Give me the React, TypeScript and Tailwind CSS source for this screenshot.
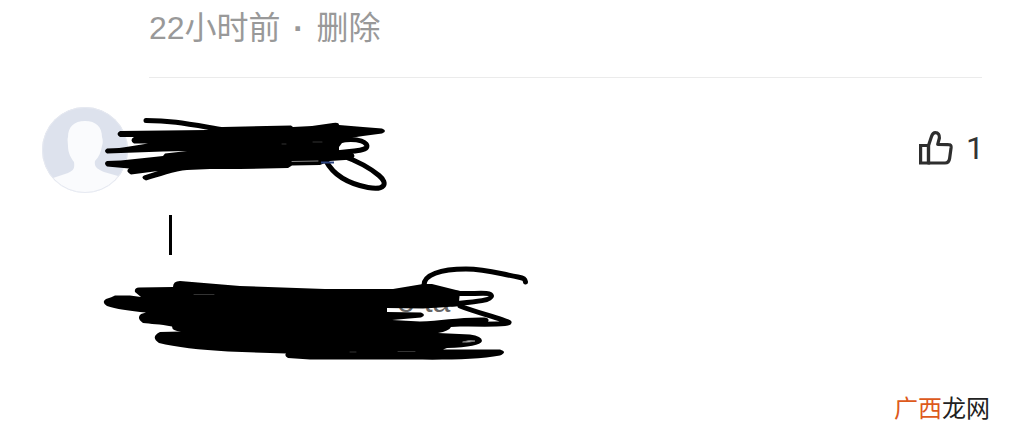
const textFont = "font-['Liberation_Sans','Noto_Sans_CJK_SC',sans-serif]";

function Avatar() {
  return (
    <svg className="w-[86px] h-[86px] shrink-0" viewBox="0 0 86 86" role="img" aria-label="用户头像">
      <clipPath id="avatar-clip">
        <circle cx="43" cy="43" r="43" />
      </clipPath>
      <circle cx="43" cy="43" r="43" fill="#dde2ed" />
      <path
        clipPath="url(#avatar-clip)"
        fill="#fafbfd"
        d="M43 14C32 14 26 20 26 30C25 33 26 36 26 39C26 46 29 51 32 55C33 62 31 64 26 66L11 71L11 88H76V69L62 65C55 62 52 60 53 54C57 50 59 45 60 39C61 36 61 33 60 30C60 20 54 14 43 14Z"
      />
      <circle cx="43" cy="43" r="42.5" fill="none" stroke="#e6e9f1" />
    </svg>
  );
}

function ThumbIcon() {
  return (
    <svg
      className="w-9 h-9"
      viewBox="919 129 36 36"
      fill="none"
      stroke="#2e2e2e"
      strokeWidth="3.2"
      strokeLinejoin="round"
      aria-hidden="true"
    >
      <path d="M929.5 144.5H921.6V162H929.5Z" strokeLinejoin="miter" />
      <path d="M929.5 144.5L932.5 135.5C933.5 132.5 934.5 131.6 936.3 131.6C939.3 131.6 940.6 134 940.4 137L938.7 143.3L949.5 143.6C951.5 143.6 952.3 144.5 952.1 146.5L950.6 157.5C950.2 160.5 949 162 946 162H929.5Z" />
    </svg>
  );
}

function NameScribble() {
  return (
    <svg
      className="absolute left-[100px] top-[32px] w-[300px] h-[90px]"
      viewBox="100 110 300 90"
      fill="none"
      stroke="#000"
      strokeLinecap="round"
      strokeLinejoin="round"
      aria-hidden="true"
    >
      <path
        fill="#000"
        stroke="none"
        d="M120 131L207 130L223 127L291 125.500L293 127L312 126L333 123Q339 122 339 125L363 127L382 128.500Q388 131 382 133.500L363 136L353 137.500L342 143L339 147V151L352 152.500Q357 156 352 159L345 160L330 161L320 165L292 165.500L288 168L240 169L210 169L187 170C175 171 158 177 146 180.500Q140 178 144 175.500L158 171L131 174.500Q125 171 129 168.500L107 166.500Q103 163 107 161C125 161 145 157.500 163 156L165 153.500L187 151L163 151.500L107 153.500Q103 151 107 148.500C125 148.500 135 145 148 143.500L134 143.500Q129 140 134 137L120 137Q115 134 120 131Z"
      />
      <g strokeWidth="5">
        <path d="M146 120.500C172 120.500 188 124 224 130" />
        <path d="M340 140.500C359 137 369 143 366.500 147.500C364 151 352 151 335 153" />
        <path d="M326 161C334 176 350 184 368 187.500C384 190.500 389 184 379 175.500C370 168 357 161 343 156" />
      </g>
      <path d="M292 161.500L318 161" stroke="#858585" strokeWidth="1" />
      <path d="M321 162.500H334" stroke="#2b4380" strokeWidth="2" strokeLinecap="butt" />
      <path d="M313 142H322M282 144H286" stroke="#333" strokeWidth="1" />
    </svg>
  );
}

function CommentScribble() {
  return (
    <svg
      className="absolute left-[100px] top-[182px] w-[440px] h-[110px]"
      viewBox="100 260 440 110"
      fill="none"
      stroke="#000"
      strokeLinecap="round"
      strokeLinejoin="round"
      aria-hidden="true"
    >
      <path
        fill="#000"
        stroke="none"
        d="M106 299Q112 297 115 295.500L130 295.500L141 297L135 292Q134 288 139 287.500L173 287Q173 281 180 281L240 286L325 289L393 289L423 284L432 284L460 291L459 302L461 306L440 307.500L423 308.500L387 308L387 312L421 312.500Q427 315 421 317.500L392 320L420 321.500C440 321 460 317 485 317.500Q491 319 487 323L451 327Q449 331 438 333L470 334.500Q482 336 482 341Q480 347 447 348L443 349.500L500 349.500Q508 352 500 355.500C480 359.500 445 360 413 359.500H310L288 358Q284 356 286 353.500L228 351.500C200 350 175 347 159 343Q150 337 160 332L181 331.500Q172 331 172 326.500C160 324 150 324 143 323Q136 318 141 314L146 312.500C130 311 115 309 107 306Q101 302 106 299Z"
      />
      <g strokeWidth="5">
        <path d="M424 285C424 275 440 269 466 269C487 269 500 274 518 277C524 278 525 279 525.500 282" />
        <path d="M455 293C470 295 491 291 491.500 296C491 301 472 302 452 304" />
        <path d="M460 306C475 312 502 319 509 322.500C506 325 480 324 445 324" />
      </g>
      <path d="M463 342Q469 339.500 475 341Q470 342.500 463 342Z" fill="#eee" stroke="#777" strokeWidth="1" />
      <path d="M194 294.500H214M398 351.500H415M350 352H356" stroke="#333" strokeWidth="1" />
    </svg>
  );
}

export default function App() {
  return (
    <main className={`w-full bg-white text-[#999] text-[32px] ${textFont}`}>
      <div className="pl-[149px] pr-[42px]">
        <div className="flex items-start gap-3 border-b border-[#ebebeb] pt-1 pb-[25px] leading-[48px]">
          <time>22小时前</time>
          <span className="w-3 text-center font-bold">·</span>
          <button type="button">删除</button>
        </div>
      </div>

      <article className="relative pl-[42px] pr-10 pt-[29px]">
        <header className="flex items-center justify-between">
          <Avatar />
          <button type="button" aria-label="赞 1" className="flex items-center gap-3 pb-1 text-[#333] leading-9">
            <ThumbIcon />
            <span className="font-['Roboto',sans-serif]">1</span>
          </button>
        </header>

        <div className="pl-[107px] pt-[22px]">
          <div className="ml-5 w-[3px] h-10 bg-black" />
          <p className="mt-6 pl-[248px] leading-[44px] text-[#666]">o ta</p>
        </div>

        <NameScribble />
        <CommentScribble />
      </article>

      <footer className="flex justify-end pt-[74px] pb-4 pr-[34px] text-2xl leading-6 text-[#222]">
        <span className="text-[#dd5a1c]">广西</span>
        <span>龙网</span>
      </footer>
    </main>
  );
}
